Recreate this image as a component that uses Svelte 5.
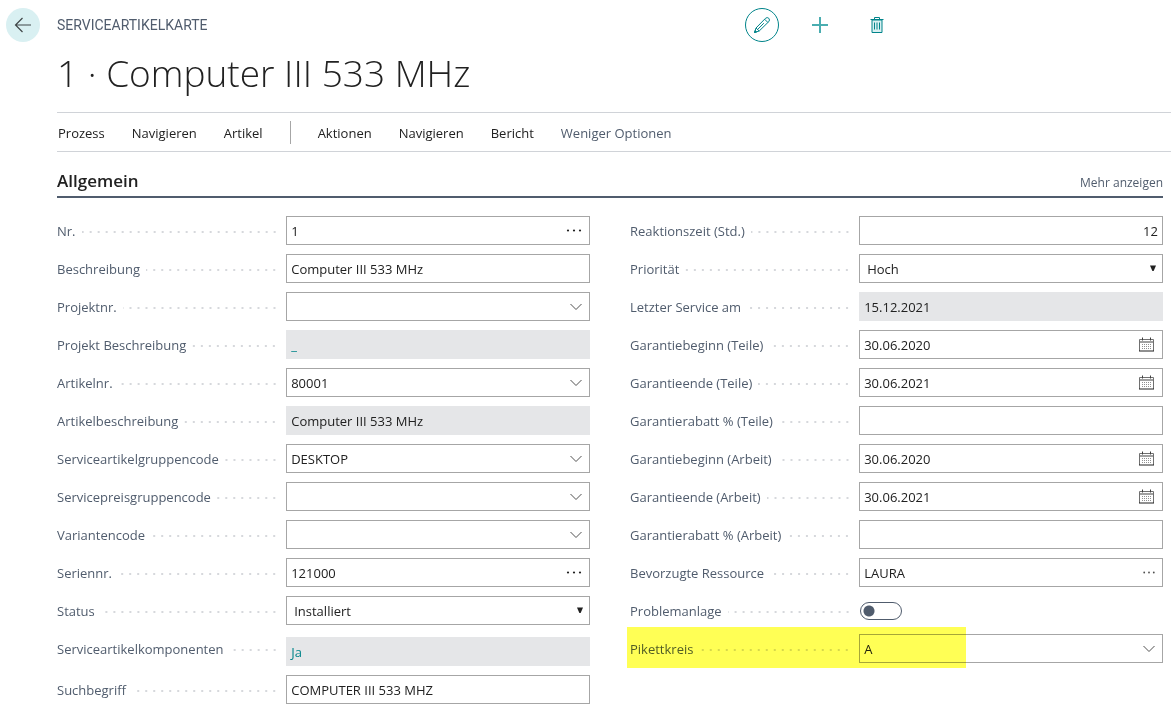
<script lang="ts">
    type Field = {
        id: string;
        label: string;
        kind: 'text' | 'dots' | 'lookup' | 'date' | 'select' | 'readonly' | 'link' | 'switch';
        value?: string;
        options?: string[];
        numeric?: boolean;
        small?: boolean;
        offset?: boolean;
        marked?: boolean;
    };

    let left: Field[] = $state([
        { id: 'no', label: 'Nr.', kind: 'dots', value: '1' },
        { id: 'description', label: 'Beschreibung', kind: 'text', value: 'Computer III 533 MHz' },
        { id: 'project-no', label: 'Projektnr.', kind: 'lookup', value: '' },
        { id: 'project-description', label: 'Projekt Beschreibung', kind: 'link', value: '_' },
        { id: 'item-no', label: 'Artikelnr.', kind: 'lookup', value: '80001' },
        { id: 'item-description', label: 'Artikelbeschreibung', kind: 'readonly', value: 'Computer III 533 MHz' },
        { id: 'group-code', label: 'Serviceartikelgruppencode', kind: 'lookup', value: 'DESKTOP' },
        { id: 'price-group', label: 'Servicepreisgruppencode', kind: 'lookup', value: '' },
        { id: 'variant', label: 'Variantencode', kind: 'lookup', value: '' },
        { id: 'serial-no', label: 'Seriennr.', kind: 'dots', value: '121000' },
        { id: 'status', label: 'Status', kind: 'select', value: 'Installiert', options: ['Installiert'] },
        { id: 'components', label: 'Serviceartikelkomponenten', kind: 'link', value: 'Ja', offset: true },
        { id: 'search', label: 'Suchbegriff', kind: 'text', value: 'COMPUTER III 533 MHZ' }
    ]);

    let right: Field[] = $state([
        { id: 'response', label: 'Reaktionszeit (Std.)', kind: 'text', value: '12', numeric: true },
        { id: 'priority', label: 'Priorität', kind: 'select', value: 'Hoch', options: ['Hoch'] },
        { id: 'last-service', label: 'Letzter Service am', kind: 'readonly', value: '15.12.2021' },
        { id: 'parts-start', label: 'Garantiebeginn (Teile)', kind: 'date', value: '30.06.2020' },
        { id: 'parts-end', label: 'Garantieende (Teile)', kind: 'date', value: '30.06.2021' },
        { id: 'parts-discount', label: 'Garantierabatt % (Teile)', kind: 'text', value: '' },
        { id: 'labor-start', label: 'Garantiebeginn (Arbeit)', kind: 'date', value: '30.06.2020' },
        { id: 'labor-end', label: 'Garantieende (Arbeit)', kind: 'date', value: '30.06.2021' },
        { id: 'labor-discount', label: 'Garantierabatt % (Arbeit)', kind: 'text', value: '' },
        { id: 'resource', label: 'Bevorzugte Ressource', kind: 'dots', value: 'LAURA', small: true },
        { id: 'problem', label: 'Problemanlage', kind: 'switch' },
        { id: 'circle', label: 'Pikettkreis', kind: 'lookup', value: 'A', marked: true }
    ]);

    let columns = $derived([left, right]);
</script>

{#snippet control(field: Field)}
    {#if field.kind === 'select'}
        <div class="box">
            <select id={field.id} bind:value={field.value}>
                {#each field.options ?? [] as option}
                    <option>{option}</option>
                {/each}
            </select>
            <svg class="arrow" width="8" height="7" viewBox="0 0 8 7"><path d="M1 0.5h6L4.6 6H3.4z" fill="#212121" /></svg>
        </div>
    {:else if field.kind === 'readonly'}
        <input class="readonly" id={field.id} value={field.value} readonly />
    {:else if field.kind === 'link'}
        <div class="readonly"><a id={field.id} href="#{field.id}">{field.value}</a></div>
    {:else if field.kind === 'switch'}
        <input class="switch" id={field.id} type="checkbox" role="switch" />
    {:else}
        <div class="box">
            <input id={field.id} class:numeric={field.numeric} bind:value={field.value} />
            {#if field.kind === 'lookup'}
                <button aria-label="Nachschlagen">
                    <svg width="12" height="8" viewBox="0 0 12 8"><path d="M0.5 1L6 6.5L11.5 1" fill="none" stroke="#505050" /></svg>
                </button>
            {:else if field.kind === 'dots'}
                <button class:wide={!field.small} aria-label="Bearbeiten">
                    {#if field.small}
                        <svg width="12" height="3" viewBox="0 0 12 3" fill="#505050"><circle cx="1.2" cy="1.5" r="0.9" /><circle cx="6" cy="1.5" r="0.9" /><circle cx="10.8" cy="1.5" r="0.9" /></svg>
                    {:else}
                        <svg width="16" height="3" viewBox="0 0 16 3" fill="#212121"><circle cx="2" cy="1.5" r="1.1" /><circle cx="8" cy="1.5" r="1.1" /><circle cx="14" cy="1.5" r="1.1" /></svg>
                    {/if}
                </button>
            {:else if field.kind === 'date'}
                <button class="wide" aria-label="Datum auswählen">
                    <svg width="16" height="15" viewBox="0 0 16 15" fill="none">
                        <path d="M0.5 2.5h14v11.5" stroke="#707070" />
                        <path d="M0.5 2.5v11.5" stroke="#707070" />
                        <path d="M0 14h15" stroke="#212121" />
                        <path d="M1 5h13" stroke="#a0a0a0" stroke-width="2" />
                        <path d="M3.5 0.5v3M11.5 0.5v3" stroke="#404040" />
                        <path d="M3 7.5h10M3 9.5h10M3 11.5h10" stroke="#909090" stroke-dasharray="1 1" />
                    </svg>
                </button>
            {/if}
        </div>
    {/if}
{/snippet}

<main>
    <header>
        <button class="back" aria-label="Zurück">
            <svg width="18" height="16" viewBox="0 0 18 16" fill="none" stroke="#404648" stroke-width="1.2"><path d="M17 8H1.5M8.5 1L1.5 8L8.5 15" /></svg>
        </button>
        <div class="topline">
            <span class="caption">SERVICEARTIKELKARTE</span>
            <div class="tools">
                <button class="edit" aria-label="Bearbeiten">
                    <svg width="18" height="18" viewBox="0 0 18 18" fill="none" stroke="#00848a">
                        <path d="M1.5 16.5L3 12L12.5 2.3Q14.2 0.8 15.8 2.3Q17.2 4 15.8 5.6L6.2 15z" />
                        <path d="M3 12L6.2 15M11.6 3.2L14.9 6.5M4.8 13.3L10.8 7.2" />
                        <path d="M1.5 16.5L2.1 14.5L3.6 15.9z" fill="#00848a" />
                    </svg>
                </button>
                <button aria-label="Neu">
                    <svg width="16" height="16" viewBox="0 0 16 16"><path d="M8 0v16M0 8h16" stroke="#4aadb0" stroke-width="2" /></svg>
                </button>
                <button aria-label="Löschen">
                    <svg width="14" height="17" viewBox="0 0 14 17" fill="none" stroke="#00848a">
                        <path d="M2 3h10v12.5h-10z" fill="#d9f0f2" />
                        <path d="M0.5 2.5h13M4.5 2V0.5h5V2" />
                        <path d="M4.5 5.5v7M7 5.5v7M9.5 5.5v7" />
                    </svg>
                </button>
            </div>
        </div>
    </header>

    <div class="content">
        <h1>1 · Computer III 533 MHz</h1>

        <nav>
            <button>Prozess</button>
            <button>Navigieren</button>
            <button>Artikel</button>
            <span class="divider"></span>
            <button>Aktionen</button>
            <button>Navigieren</button>
            <button>Bericht</button>
            <button class="less">Weniger Optionen</button>
        </nav>

        <section>
            <div class="section-head">
                <h2>Allgemein</h2>
                <button>Mehr anzeigen</button>
            </div>
            <div class="columns">
                {#each columns as fields}
                    <div class="column">
                        {#each fields as field (field.id)}
                            <div class="row" class:offset={field.offset} class:marked={field.marked}>
                                <div class="label">
                                    <label for={field.id}>{field.label}</label>
                                    <span class="leader"></span>
                                </div>
                                <div class="control">{@render control(field)}</div>
                            </div>
                        {/each}
                    </div>
                {/each}
            </div>
        </section>
    </div>
</main>

<style>
    :global(body) {
        margin: 0;
        background: #fff;
    }

    main {
        font-family: "Open Sans", "Noto Sans", sans-serif;
        font-size: 13px;
        color: #212121;
        padding-bottom: 14px;
    }

    button {
        padding: 0;
        border: none;
        background: none;
        font: inherit;
        color: inherit;
        cursor: pointer;
    }

    svg {
        display: block;
    }

    header {
        display: flex;
        align-items: center;
        gap: 17px;
        height: 50px;
        padding-left: 6px;
    }

    .back,
    .edit {
        display: grid;
        place-items: center;
        flex: none;
        box-sizing: border-box;
        width: 34px;
        height: 34px;
        border-radius: 50%;
    }

    .back {
        background: #d9f0f2;
    }

    .edit {
        border: 1px solid #00848a;
    }

    .topline {
        flex: 1;
        display: flex;
        align-items: center;
    }

    .caption {
        flex: 0 0 61.8%;
        font-family: Roboto, sans-serif;
        font-size: 14px;
        color: #505c6d;
    }

    .tools {
        display: flex;
        align-items: center;
        gap: 33px;
    }

    .tools button:last-child {
        margin-left: 9px;
    }

    .content {
        margin-left: 57px;
    }

    h1 {
        margin: 0;
        padding-bottom: 16px;
        font-size: 37px;
        line-height: 46px;
        font-weight: 300;
    }

    nav {
        display: flex;
        align-items: center;
        gap: 27px;
        height: 38px;
        padding-left: 1px;
        border-top: 1px solid #d0d3d8;
        border-bottom: 1px solid #d0d3d8;
        white-space: nowrap;
    }

    nav button {
        padding-top: 2px;
    }

    .divider {
        width: 1px;
        height: 23px;
        background: #a6a6a6;
    }

    .less {
        color: #505c6d;
    }

    section {
        padding-right: 8px;
    }

    .section-head {
        display: flex;
        align-items: baseline;
        justify-content: space-between;
        height: 28px;
        padding-top: 16px;
        border-bottom: 2px solid #505c6d;
    }

    h2 {
        margin: 0;
        font-size: 17px;
        line-height: 26px;
        font-weight: 600;
    }

    .section-head button {
        font-size: 12px;
        color: #505c6d;
    }

    .columns {
        display: grid;
        grid-template-columns: 1fr 1fr;
        align-items: start;
        gap: 40px;
        padding-top: 18px;
    }

    .column {
        display: grid;
        gap: 9px;
    }

    .row {
        position: relative;
        display: grid;
        grid-template-columns: 43% 57%;
    }

    .label {
        display: flex;
        align-items: center;
        gap: 6px;
        height: 29px;
        padding-right: 10px;
        color: #505c6d;
        white-space: nowrap;
    }

    .leader {
        flex: 1;
        height: 2px;
        margin-top: 3px;
        background: linear-gradient(to left, transparent 1px, #d6d8dc 1px, #d6d8dc 3px, transparent 3px) right / 8px 2px repeat-x;
    }

    .control {
        min-width: 0;
    }

    .offset .control {
        padding-top: 3px;
    }

    .box,
    .readonly {
        position: relative;
        display: flex;
        align-items: center;
        box-sizing: border-box;
        width: 100%;
        height: 29px;
    }

    .box {
        border: 1px solid #a6a6a6;
    }

    input,
    select {
        flex: 1;
        min-width: 0;
        height: 100%;
        box-sizing: border-box;
        margin: 0;
        padding: 0 4px;
        border: none;
        outline: none;
        border-radius: 0;
        background: none;
        font: inherit;
        color: inherit;
    }

    select {
        appearance: none;
        padding-left: 7px;
    }

    .readonly {
        height: 29px;
        padding: 0 5px;
        background: #e5e6e8;
    }

    a {
        color: #00848a;
        text-decoration: none;
    }

    .numeric {
        text-align: right;
    }

    .arrow {
        position: absolute;
        right: 5px;
        top: 10px;
        pointer-events: none;
    }

    .box button {
        display: grid;
        place-items: center;
        flex: none;
        width: 26px;
        height: 100%;
    }

    .box button.wide {
        width: 29px;
    }

    .switch {
        appearance: none;
        display: block;
        width: 42px;
        height: 18px;
        margin: 6px 0 0 1px;
        border: 1px solid #505c6d;
        border-radius: 9px;
        background: radial-gradient(circle at 8px 8px, #505c6d 5px, transparent 6px);
    }

    /* highlighter stroke over the row */
    .marked::after {
        content: "";
        position: absolute;
        inset: -7px 37% -5px -3px;
        background: #ffff55;
        mix-blend-mode: multiply;
        pointer-events: none;
    }
</style>
